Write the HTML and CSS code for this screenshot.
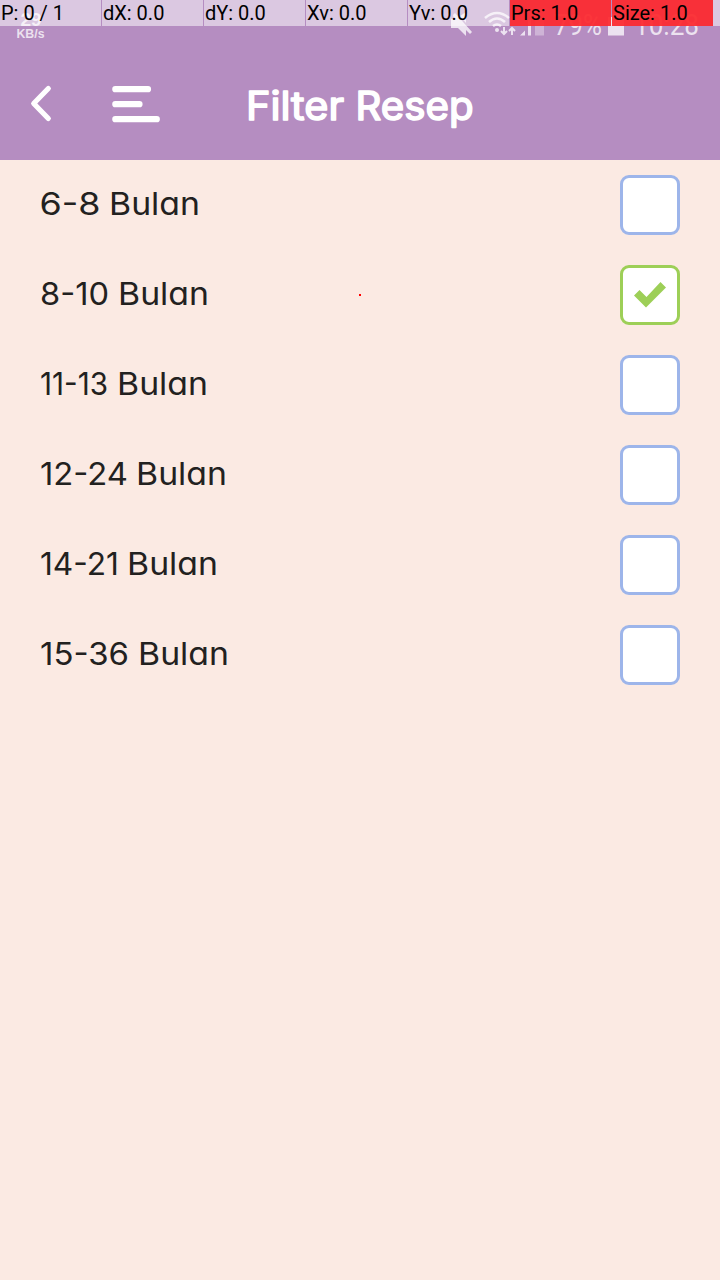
FILE: index.html
```html
<!DOCTYPE html>
<html lang="id">
<head>
<meta charset="utf-8">
<title>Filter Resep</title>
<link rel="stylesheet" href="styles.css">
</head>
<body>
<div class="screen">
  <header class="header">
    <svg class="status" viewBox="0 0 720 50" aria-hidden="true">
      <g fill="#fff" fill-opacity=".75">
        <text class="speed" x="20.500" y="26" font-size="18" textLength="21" lengthAdjust="spacingAndGlyphs">29</text>
        <text class="speed" x="16.500" y="37.500" font-size="12" textLength="28" lengthAdjust="spacingAndGlyphs">KB/s</text>
        <path d="M451 19h3l-1-4 2-2 17 19-2 2-4-4v6l-8-8h-7zM460 16l6-4v11z"/>
        <g fill="none" stroke="#fff" stroke-opacity=".75" stroke-width="2.500">
          <path d="M485 18q12-10 24 0M489 22q8-7 16 0M493 26q4-3 8 0"/>
          <path d="M504 27v7m-3-3l3 3 3-3M512 35v-7m-3 3l3-3 3 3" stroke-width="2"/>
        </g>
        <circle cx="497" cy="30" r="2"/>
        <path d="M520 35.500l5-5v5zM528 20h3v15.500h-3z"/>
        <path d="M535 18h9v17.500h-9z" opacity=".45"/>
        <text class="digits" x="554" y="35" font-size="29" textLength="48" lengthAdjust="spacingAndGlyphs">79%</text>
        <path d="M608 17h4v-3h8v3h4v18.500h-16z"/>
        <text class="digits" x="634" y="35" font-size="29" textLength="65" lengthAdjust="spacingAndGlyphs">10:28</text>
      </g>
    </svg>
    <div class="pointer">
      <span class="cell">P: 0 / 1</span>
      <span class="cell">dX: 0.0</span>
      <span class="cell">dY: 0.0</span>
      <span class="cell">Xv: 0.0</span>
      <span class="cell">Yv: 0.0</span>
      <span class="cell hot">Prs: 1.0</span>
      <span class="cell hot">Size: 1.0</span>
      <span class="cell rest"></span>
    </div>
    <div class="toolbar">
      <svg class="back" viewBox="0 0 24 40"><path d="M20.300 5.500L5.700 20.500l14.600 15"/></svg>
      <svg class="menu" viewBox="0 0 48 40"><path d="M3.300 5.200h32.700M3.300 20.200h24.200M3.300 35.200h41.500"/></svg>
      <svg class="title" viewBox="0 0 230 54"><text x="0" y="36.500" textLength="98" lengthAdjust="spacingAndGlyphs">Filter</text><text x="109.500" y="36.500" textLength="118" lengthAdjust="spacingAndGlyphs">Resep</text></svg>
    </div>
  </header>
  <main class="list">
    <div class="row"><svg class="label" viewBox="0 0 220 50"><text x="-.5" y="35" textLength="61" lengthAdjust="spacingAndGlyphs">6-8</text><text x="69" y="35" textLength="91" lengthAdjust="spacingAndGlyphs">Bulan</text></svg><span class="box"></span></div>
    <div class="row"><svg class="label" viewBox="0 0 220 50"><text x="0" y="35" textLength="69" lengthAdjust="spacingAndGlyphs">8-10</text><text x="78" y="35" textLength="91" lengthAdjust="spacingAndGlyphs">Bulan</text></svg><span class="box checked"><svg viewBox="0 0 32 26"><path d="M0 13.500l5.500-5.500 7 7L26.500 0 32 5.500 12 25.500z"/></svg></span></div>
    <div class="row"><svg class="label" viewBox="0 0 220 50"><text x="0" y="35" textLength="68" lengthAdjust="spacingAndGlyphs">11-13</text><text x="77" y="35" textLength="91" lengthAdjust="spacingAndGlyphs">Bulan</text></svg><span class="box"></span></div>
    <div class="row"><svg class="label" viewBox="0 0 220 50"><text x="0" y="35" textLength="88" lengthAdjust="spacingAndGlyphs">12-24</text><text x="96" y="35" textLength="91" lengthAdjust="spacingAndGlyphs">Bulan</text></svg><span class="box"></span></div>
    <div class="row"><svg class="label" viewBox="0 0 220 50"><text x="0" y="35" textLength="79" lengthAdjust="spacingAndGlyphs">14-21</text><text x="87" y="35" textLength="91" lengthAdjust="spacingAndGlyphs">Bulan</text></svg><span class="box"></span></div>
    <div class="row"><svg class="label" viewBox="0 0 220 50"><text x="0" y="35" textLength="89" lengthAdjust="spacingAndGlyphs">15-36</text><text x="98" y="35" textLength="91" lengthAdjust="spacingAndGlyphs">Bulan</text></svg><span class="box"></span></div>
  </main>
  <span class="touch"></span>
</div>
</body>
</html>
```
FILE: styles.css
```css
* { box-sizing: border-box; }
body { margin: 0; }
.screen {
  position: relative;
  width: 720px;
  height: 1280px;
  background: #fbeae3;
  overflow: hidden;
}
.header {
  position: relative;
  height: 160px;
  background: #b58dc1;
}
.status {
  position: absolute;
  top: 0;
  left: 0;
  width: 720px;
  height: 50px;
}
.speed { font-family: "Liberation Sans", Arial, sans-serif; font-weight: 700; }
.digits { font-family: Roboto, sans-serif; }
.pointer {
  position: relative;
  display: flex;
  gap: 1px;
  height: 26px;
}
.cell {
  width: 101px;
  padding-left: 1px;
  background: rgba(255, 255, 255, .52);
  font: 20px/26px Roboto, sans-serif;
  color: #000;
  white-space: nowrap;
}
.cell.hot { background: rgba(252, 43, 48, .94); }
.cell.rest { flex: 1; padding: 0; margin-left: -1px; }
.toolbar {
  display: flex;
  align-items: flex-start;
  padding: 57px 0 0 28px;
}
.toolbar path {
  fill: none;
  stroke: #fff;
  stroke-width: 5.200;
  stroke-linecap: round;
  stroke-linejoin: round;
}
.back { width: 24px; height: 40px; }
.menu { width: 48px; height: 40px; margin: 1px 0 0 60px; }
.menu path { stroke-width: 6.200; }
.title { width: 230px; height: 54px; margin-left: 86px; overflow: visible; }
.title text {
  font: 400 39px Inter, sans-serif;
  font-feature-settings: "cv11";
  fill: #fff;
  stroke: #fff;
  stroke-width: 1.600;
  stroke-linejoin: round;
}
.list { padding: 0 40px; }
.row {
  display: flex;
  align-items: center;
  justify-content: space-between;
  height: 90px;
}
.label { width: 220px; height: 50px; overflow: visible; }
.label text {
  font: 400 31.500px Inter, sans-serif;
  font-feature-settings: "cv11", "ss03";
  fill: #222120;
}
.box {
  display: flex;
  align-items: center;
  justify-content: center;
  width: 60px;
  height: 60px;
  border: 3px solid #9db5ea;
  border-radius: 9px;
  background: #fff;
}
.box.checked { border-color: #9dcf57; }
.box svg { width: 32px; height: 26px; fill: #9dcf57; }
.touch {
  position: absolute;
  top: 294px;
  left: 359px;
  width: 2px;
  height: 2px;
  background: #f00;
}
```
